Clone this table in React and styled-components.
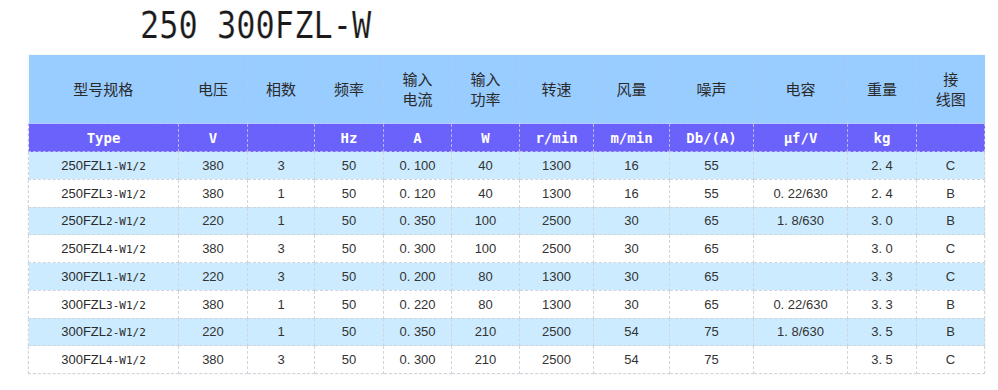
import React from "react";
import styled, { createGlobalStyle } from "styled-components";

const Global = createGlobalStyle`
  html, body { margin: 0; padding: 0; background: #fff; }
  body { font-family: "Liberation Sans", Arial, "Noto Sans CJK SC", sans-serif; }
`;

const Page = styled.div`
  width: 998px;
  height: 390px;
  background: #fff;
  overflow: hidden;
`;

const Title = styled.h1`
  margin: 0;
  height: 55px;
  padding-left: 140px;
  box-sizing: border-box;
  font-family: "DejaVu Sans Mono", "Liberation Mono", monospace;
  font-weight: normal;
  font-size: 32px;
  line-height: 55px;
  color: #1a1a1a;
  display: flex;
  align-items: center;
  span {
    display: inline-block;
    transform: scaleY(1.15);
    transform-origin: center 65%;
    -webkit-text-stroke: 0.2px #fff;
  }
`;

const Table = styled.table`
  margin-left: 28px;
  width: 956px;
  border-collapse: collapse;
  table-layout: fixed;
  box-shadow: 0 0 1px rgba(0, 0, 0, 0.15);
`;

const HeadCell = styled.th`
  background: #99ccff;
  height: 68px;
  padding: 0;
  font-family: "Noto Sans CJK SC", sans-serif;
  font-weight: normal;
  font-size: 15px;
  line-height: 20px;
  color: #2a2a2a;
  text-align: center;
  border-left: 1px dashed #a9cdf0;
  &:first-child { border-left: none; }
`;

const HeadLine = styled.div`
  height: 20px;
  line-height: 20px;
`;

const UnitCell = styled.td`
  background: #6b62fb;
  height: 27px;
  padding: 0;
  color: #fff;
  font-family: "DejaVu Sans Mono", "Liberation Mono", "Noto Sans CJK SC", monospace;
  font-weight: bold;
  font-size: 14px;
  text-align: center;
  border: 1px dashed #b9b4f0;
  border-top: 1px dashed #c8c4ff;
`;

const Row = styled.tr`
  background: ${(p) => (p.$alt ? "#ccebfe" : "#ffffff")};
`;

const Cell = styled.td`
  height: 26.75px;
  padding: 0;
  text-align: center;
  font-family: "Liberation Sans", Arial, sans-serif;
  font-size: 13px;
  color: #333;
  border: 1px dashed #cfd5dc;
`;

const ModelMain = styled.span`
  font-family: "Liberation Sans", Arial, sans-serif;
  font-size: 13px;
  color: #2a2a2a;
`;

const ModelSub = styled.span`
  font-family: "DejaVu Sans Mono", "Liberation Mono", monospace;
  font-size: 11px;
  color: #2a2a2a;
`;

const cols = [150, 69, 67, 69, 68, 68, 74, 76, 84, 94, 69, 68];

const heads = [
  ["型号规格"], ["电压"], ["相数"], ["频率"], ["输入", "电流"], ["输入", "功率"],
  ["转速"], ["风量"], ["噪声"], ["电容"], ["重量"], ["接", "线图"],
];

const units = ["Type", "V", "", "Hz", "A", "W", "r/min", "m/min", "Db/(A)", "µf/V", "kg", ""];

const rows = [
  ["250", "1", "380", "3", "50", "0. 100", "40", "1300", "16", "55", "", "2. 4", "C"],
  ["250", "3", "380", "1", "50", "0. 120", "40", "1300", "16", "55", "0. 22/630", "2. 4", "B"],
  ["250", "2", "220", "1", "50", "0. 350", "100", "2500", "30", "65", "1. 8/630", "3. 0", "B"],
  ["250", "4", "380", "3", "50", "0. 300", "100", "2500", "30", "65", "", "3. 0", "C"],
  ["300", "1", "220", "3", "50", "0. 200", "80", "1300", "30", "65", "", "3. 3", "C"],
  ["300", "3", "380", "1", "50", "0. 220", "80", "1300", "30", "65", "0. 22/630", "3. 3", "B"],
  ["300", "2", "220", "1", "50", "0. 350", "210", "2500", "54", "75", "1. 8/630", "3. 5", "B"],
  ["300", "4", "380", "3", "50", "0. 300", "210", "2500", "54", "75", "", "3. 5", "C"],
];

export default function App() {
  return (
    <Page>
      <Global />
      <Title><span>250 300FZL-W</span></Title>
      <Table>
        <colgroup>
          {cols.map((w, i) => (
            <col key={i} style={{ width: w }} />
          ))}
        </colgroup>
        <thead>
          <tr>
            {heads.map((h, i) => (
              <HeadCell key={i}>
                {h.map((l, j) => (
                  <HeadLine key={j}>{l}</HeadLine>
                ))}
              </HeadCell>
            ))}
          </tr>
          <tr>
            {units.map((u, i) => (
              <UnitCell key={i}>{u}</UnitCell>
            ))}
          </tr>
        </thead>
        <tbody>
          {rows.map((r, i) => (
            <Row key={i} $alt={i % 2 === 0}>
              <Cell>
                <ModelMain>{r[0]}FZL</ModelMain>
                <ModelSub>{r[1]}-W1/2</ModelSub>
              </Cell>
              {r.slice(2).map((v, j) => (
                <Cell key={j}>{v}</Cell>
              ))}
            </Row>
          ))}
        </tbody>
      </Table>
    </Page>
  );
}
